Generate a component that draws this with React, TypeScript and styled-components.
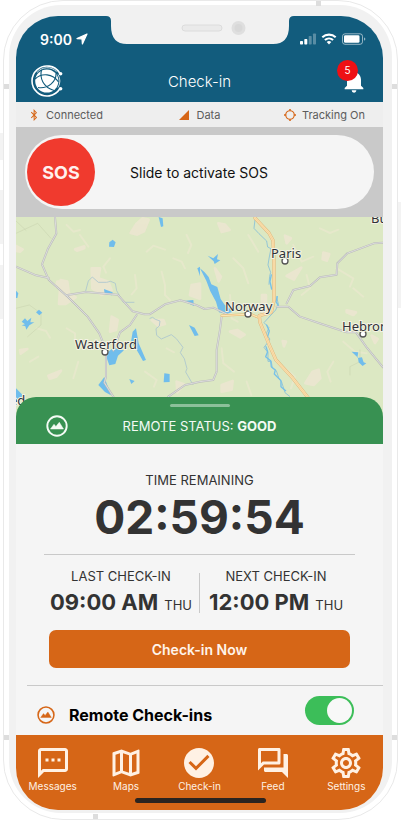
import React, { useState } from "react";
import styled, { createGlobalStyle } from "styled-components";
import {
  MdCheckCircle,
  MdNotifications,
  MdOutlineForum,
  MdOutlineMap,
  MdOutlineSettings,
  MdOutlineSms,
  MdSignalCellular4Bar,
} from "react-icons/md";
import { FaBluetoothB } from "react-icons/fa";

const color = {
  blue: "#125c7d",
  orange: "#d66617",
  green: "#389152",
  panel: "#f5f5f5",
  bezel: "#f1f1f1",
  ink: "#333333",
  line: "#c9c9c9",
};

const GlobalStyle = createGlobalStyle`
  *, *::before, *::after { box-sizing: border-box; }
  body {
    margin: 0;
    background: #ffffff;
    color: ${color.ink};
    font-family: Inter, "Liberation Sans", sans-serif;
  }
  button, input { font: inherit; margin: 0; }
`;

const Stage = styled.div`
  position: relative;
  display: flex;
  min-height: 100vh;
  padding: 0 3px;
`;

const Shell = styled.div`
  position: relative;
  display: flex;
  flex: 1;
  min-width: 0;
  padding: 4px 5px 6px;
  border: 1px solid #e9e9e9;
  border-radius: 60px;
  background: #ffffff;
`;

const Bezel = styled.div`
  display: flex;
  flex: 1;
  min-width: 0;
  padding: 11px 9px 3px 7px;
  border-radius: 52px;
  background: ${color.bezel};
`;

const Screen = styled.main`
  position: relative;
  display: flex;
  flex: 1;
  flex-direction: column;
  min-width: 0;
  overflow: hidden;
  border-radius: 42px;
  background: ${color.panel};
`;

const Antenna = styled.span<{ $side: "left" | "right" | "top" | "bottom"; $at: string }>`
  position: absolute;
  width: 5px;
  height: 5px;
  background: #dddddd;
  ${({ $side }) => `${$side}: 0;`}
  ${({ $side, $at }) => ($side === "left" || $side === "right" ? `top: ${$at};` : `left: ${$at};`)}
`;

const SideKey = styled.span<{ $side: "left" | "right"; $top: number; $length: number }>`
  position: absolute;
  ${({ $side }) => `${$side}: 0;`}
  top: ${({ $top }) => $top}px;
  width: 3px;
  height: ${({ $length }) => $length}px;
  background: #f3f3f3;
`;

const Notch = styled.svg`
  position: absolute;
  top: 0;
  left: 50%;
  width: 188px;
  height: 28px;
  transform: translateX(-50%);
`;

const Header = styled.header`
  background: ${color.blue};
  color: #ffffff;
`;

const StatusBar = styled.div`
  display: flex;
  align-items: center;
  justify-content: space-between;
  height: 46px;
  padding: 0 17px 0 24px;
`;

const Clock = styled.div`
  display: flex;
  align-items: center;
  gap: 4px;
  font-size: 14px;
  font-weight: 600;
`;

const TitleBar = styled.div`
  display: grid;
  grid-template-columns: 1fr auto 1fr;
  align-items: center;
  height: 40px;
  padding: 0 15px 2px;
`;

const Title = styled.h1`
  margin: 0;
  font-size: 15px;
  font-weight: 300;
`;

const BellButton = styled.button`
  position: relative;
  display: flex;
  justify-self: end;
  padding: 0;
  border: 0;
  background: none;
  color: #ffffff;
  font-size: 28px;
`;

const Badge = styled.span`
  position: absolute;
  top: -7px;
  right: 10px;
  width: 21px;
  height: 21px;
  border-radius: 50%;
  background: #ee1015;
  font-size: 10px;
  line-height: 21px;
  text-align: center;
`;

const Connection = styled.ul`
  display: flex;
  align-items: center;
  justify-content: space-between;
  height: 25px;
  margin: 0;
  padding: 0 18px 0 12px;
  background: #eeeeee;
  color: #5c5c5c;
  font-size: 11px;
  list-style: none;
`;

const ConnectionItem = styled.li`
  display: flex;
  align-items: center;
  gap: 6px;
  &:nth-child(2) { padding-left: 12px; }
  svg { width: 12px; height: 12px; color: ${color.orange}; }
`;

const SosBand = styled.section`
  height: 90px;
  padding: 8px 9px;
  background: #c9c9c9;
`;

const SosTrack = styled.label`
  position: relative;
  display: flex;
  align-items: center;
  height: 74px;
  padding: 0 3px 0 2px;
  border-radius: 37px;
  background: ${color.panel};
  color: #111111;
  font-size: 14px;
`;

const SosKnob = styled.span`
  display: grid;
  place-items: center;
  flex: none;
  width: 68px;
  height: 68px;
  border-radius: 50%;
  background: #f03a2e;
  color: #fff1ee;
  font-size: 18px;
  font-weight: 700;
`;

const SosCaption = styled.span`
  flex: 1;
  padding-right: 68px;
  text-align: center;
`;

const SosRange = styled.input`
  position: absolute;
  inset: 0;
  width: 100%;
  height: 100%;
  opacity: 0;
`;

const MapView = styled.svg`
  display: block;
  flex: 1;
  width: 100%;
  min-height: 200px;
  text {
    fill: #303238;
    stroke: #f4f3e4;
    stroke-width: 2px;
    paint-order: stroke;
    font-family: "Noto Sans", sans-serif;
    font-size: 13px;
  }
`;

const Sheet = styled.section`
  position: relative;
  margin-top: -20px;
`;

const SheetHeader = styled.div`
  display: grid;
  grid-template-columns: 1fr auto 1fr;
  align-items: center;
  height: 47px;
  padding: 10px 30px 0;
  border-radius: 20px 20px 0 0;
  background: ${color.green};
  color: #f4fbf5;
  font-size: 13px;
`;

const Grip = styled.span`
  position: absolute;
  top: 7px;
  left: calc(50% - 30px);
  width: 60px;
  height: 3px;
  border-radius: 2px;
  background: #8cc09a;
`;

const Countdown = styled.div`
  margin: 0 28px;
  padding: 27px 0 9px;
  border-bottom: 1px solid ${color.line};
  text-align: center;
`;

const Caption = styled.div`
  font-size: 13px;
  line-height: 18px;
`;

const Timer = styled.div`
  font-size: 46px;
  font-weight: 700;
  line-height: 56px;
`;

const Times = styled.div`
  display: grid;
  grid-template-columns: 1fr 1px 1fr;
  padding: 12px 0 13px;
`;

const TimeCell = styled.div<{ $align: "start" | "end" }>`
  justify-self: ${({ $align }) => $align};
  padding: 0 7px 0 9px;
  text-align: center;
  white-space: nowrap;
`;

const TimeDivider = styled.span`
  margin: 6px 0 4px;
  background: ${color.line};
`;

const Time = styled.div`
  display: flex;
  align-items: baseline;
  gap: 6px;
  height: 32px;
  padding-top: 4px;
  font-size: 13px;
  strong { font-size: 22px; font-weight: 700; }
`;

const CheckInButton = styled.button`
  display: block;
  width: calc(100% - 66px);
  height: 38px;
  margin: 0 33px;
  border: 0;
  border-radius: 7px;
  background: ${color.orange};
  color: #fff4ea;
  font-size: 14px;
  font-weight: 600;
`;

const RemoteRow = styled.label`
  display: flex;
  align-items: center;
  height: 50px;
  margin: 17px 0 0 11px;
  padding: 0 29px 0 10px;
  border-top: 1px solid ${color.line};
  color: #000000;
`;

const RemoteName = styled.span`
  flex: 1;
  padding: 9px 0 0 14px;
  font-size: 16px;
  font-weight: 700;
`;

const RemoteIcon = styled.span`
  display: flex;
  padding-top: 9px;
  color: ${color.orange};
`;

const Switch = styled.input`
  position: relative;
  flex: none;
  width: 49px;
  height: 29px;
  border-radius: 15px;
  background: #d0d0d0;
  appearance: none;
  &::after {
    content: "";
    position: absolute;
    top: 2px;
    left: 2px;
    width: 25px;
    height: 25px;
    border-radius: 50%;
    background: #f8f8f8;
  }
  &:checked { background: #3cbe59; }
  &:checked::after { left: 22px; }
`;

const TabBar = styled.nav`
  position: relative;
  display: grid;
  grid-template-columns: repeat(5, 1fr);
  height: 75px;
  padding-top: 10px;
  background: ${color.orange};
`;

const Tab = styled.a`
  display: flex;
  flex-direction: column;
  align-items: center;
  color: #fff1e4;
  font-size: 10px;
  line-height: 12px;
  text-decoration: none;
  svg { width: 36px; height: 36px; margin-bottom: -1px; }
`;

const HomeBar = styled.span`
  position: absolute;
  bottom: 7px;
  left: calc(50% - 65px);
  width: 131px;
  height: 5px;
  border-radius: 3px;
  background: #2b2420;
`;

function Logo() {
  return (
    <svg width="32" height="32" viewBox="0 0 32 32" fill="none" aria-hidden="true">
      <circle cx="15.800" cy="16" r="11.600" fill="#fff" />
      <path d="M28.700 8A15 15 0 1 0 28.700 24" stroke="#fff" strokeWidth="1.600" />
      <path d="M25.500 6.500A13.300 13.300 0 0 0 6 7.500" stroke="#fff" strokeWidth=".8" />
      <path d="M27 9.500A13 13 0 0 1 27 22.500" stroke="#fff" strokeWidth=".8" />
      <circle cx="29.600" cy="8.700" r="1.800" fill="#fff" />
      <circle cx="29.600" cy="23.700" r="1.800" fill="#fff" />
      <g stroke={color.blue} strokeWidth="1.100">
        <path d="M10.500 5C8.500 13 12 22 23 25.500" />
        <path d="M4 14C11 7.500 21.500 8.500 27.500 17" />
        <path d="M25 8.500C25.500 16.500 17 24 7 22.500" />
      </g>
    </svg>
  );
}

function LocationArrow() {
  return (
    <svg width="12" height="12" viewBox="0 0 12 12" aria-hidden="true">
      <path d="M11 1 1 5.600 6 6 6.400 11Z" fill="#fff" stroke="#fff" strokeWidth="1.200" strokeLinejoin="round" />
    </svg>
  );
}

function StatusGlyphs() {
  return (
    <svg width="66" height="14" viewBox="0 0 66 14" fill="none" role="img" aria-label="Signal, Wi-Fi and battery">
      <rect x="0" y="9" width="3" height="3.500" rx=".7" fill="#fff" />
      <rect x="4.300" y="7" width="3" height="5.500" rx=".7" fill="#fff" />
      <rect x="8.700" y="4" width="3" height="8.500" rx=".7" fill="#fff" opacity=".3" />
      <rect x="13" y="1.500" width="3" height="11" rx=".7" fill="#fff" opacity=".3" />
      <g stroke="#fff" strokeWidth="2.100">
        <path d="M22.300 5.200a10 10 0 0 1 13.400 0" />
        <path d="M24.900 8a6.200 6.200 0 0 1 8.200 0" />
      </g>
      <path d="M26.700 10a3.600 3.600 0 0 1 4.600 0L29 12.500Z" fill="#fff" />
      <rect x="42.500" y="1.800" width="20" height="10.500" rx="2.500" stroke="#fff" opacity=".55" />
      <rect x="44" y="3.300" width="15.500" height="7.500" rx="1.300" fill="#fff" />
      <path d="M64 5.500v3.200c1-.3 1.300-.9 1.300-1.600S65 5.800 64 5.500Z" fill="#fff" opacity=".55" />
    </svg>
  );
}

function MountainIcon({ size }: { size: number }) {
  return (
    <svg width={size} height={size} viewBox="0 0 22 22" fill="none" aria-hidden="true">
      <circle cx="11" cy="11" r="9.700" stroke="currentColor" strokeWidth="1.900" />
      <path
        d="M4.500 14 8 9.300l1.900 2.200L13.300 7.300 17.500 14Z"
        fill="currentColor"
        stroke="currentColor"
        strokeWidth=".5"
        strokeLinejoin="round"
      />
    </svg>
  );
}

function TrackingIcon() {
  return (
    <svg viewBox="0 0 13 13" fill="none" stroke="currentColor" aria-hidden="true">
      <circle cx="6.500" cy="6.500" r="4.600" strokeWidth="1.300" />
      <path d="M6.500 0v2M6.500 11V13M0 6.500h2M11 6.500H13" strokeWidth="1.700" />
    </svg>
  );
}

const fields = [
  "M275 160l25 0-5 30 30 10 10 26-30 14-28-20Z",
  "M182 195l20 5 5 35 20 12-30 20-20 0Z",
  "M408 28l20-18 18 4-14 35-20 10-20-5Z",
  "M335 305l18 10-5 30-18 5Z",
  "M455 315l35 0 5 12-20 6Z",
  "M575 210l25-4v45l-30-10Z",
  "M48 93l20 10-8 7-12-2Z",
  "M172 200l12 0-4 15-12 0Z",
  "M60 405l22-3-20 14Z",
  "M145 482l38-15-14 18-20 6Z",
  "M530 500l22 8-20 24Z",
  "M225 103l28-9 0 6-22 7Z",
  "M655 25l20 4 14 16-24 6Z",
  "M855 62l18 8-13 15Z",
  "M860 183l44-25-22 36Z",
  "M970 113l18 4-7 20-13-4Z",
  "M938 470l18-6 5 26-20 20-25-5Z",
  "M690 350l22-5 22 14-13 8Z",
  "M645 160l18 25-7 14Z",
  "M1040 286l28 6-8 8-20-8Z",
  "M1115 362l18 10-8 12Z",
  "M848 378l10 2-6 14Z",
  "M665 510l33-12-3 26-30 6Z",
  "M786 240l12 0 0 60-12-5Z",
];

const hedges = [
  "M485 170l10 40 0 30 15 15M520 130l25 10 10 20M440 110l20-18 35 12",
  "M405 180l5 40-15 18M200 30l20 20 20-5M240 60l25 35",
  "M700 130l30 30 15 45M745 60l30 50M880 90l25 50 35-15",
  "M920 180l10 40-25 20M1010 160l50 30-10 25M690 240l5 70 18 10",
  "M850 455l35 30-12 35M1030 380l35 30 35 5M665 400l5 45 32 25",
  "M200 340l25 15 0 20M90 440l25-15M235 440l-15 50M435 470l35 25-8 20",
  "M330 130l-20 25 8 18M560 60l14 30-10 24M110 340l28 8 12 20M500 400l22 12",
  "M960 40l30 14 25-10M1060 220l30 25M1000 440l-18 30 10 30M740 500l14 40",
];

const lakes = [
  "M328 82l10-8 9 8-5 14-15-1Z",
  "M476 6l12 4 2 24-7 2Z",
  "M312 222l26 10-2 9-22-4Z",
  "M398 350l10-10 8 45 22 50-9 3-20-35-16-22Z",
  "M325 410l15-12 32 8-18 16-8 25-18 4-8-23Z",
  "M295 510l18-24 20 55-18-10Z",
  "M493 475l16 2 0 24-18 1Z",
  "M388 492l16 6-10 9Z",
  "M567 330l17 8 12 23-12 2Z",
  "M550 258l30-3 2 18Z",
  "M65 320l10-10 7 8 12-10-3 14 12 0-15 9-9 13-3-10-11-3 10-3Z",
  "M108 292l9-8 10 9-9 8Z",
  "M48 227l7 8-3 14-4 0Z",
  "M48 520l20 20-6 12-14 0Z",
  "M600 160l14 12 12 14 8 22 18 8 10 36 12 17 30 20-25 8-22-5-9-32-17-31-12-32Z",
  "M623 122l17 8 14-13-3 16 10 3-17 11-3-8Z",
  "M1055 410l20 2-3 17 14-2 5 15 8 3-11 8-12-11-2-14Z",
  "M592 160l8-5 0 28Z",
];

const streams = [
  "M257 228l8-30 12-12 18 16 25 0 12-3 14 6 4 22 20 35 32 0M450 310l8-3 8 6 14 5-2 15-10 8 2 20 14 11 30-13 15 12 20 26-8 16 12 18 8 30-4 10 22 38",
  "M765 15l-3 25 15 16 23 22 3 18 10 5-5 25-4 24 8 22-3 12-2 24M830 245l5 22-8 18-35 38 15 15-9 20 12 14-10 15-8 10 12 16 0 26 10 0 3 20 12 8 8 24 8 10 10 32 14 11",
];

const minorRoads = [
  "M165 6l4 50-25 45-18 47 20 46 52 47 60-10 95 8 45 50 35 9 16 0 46-30 46-12 50 15 23 11 26-4 42 20",
  "M48 155l60 26 38 8",
  "M198 240l65 65 35 50 20 50 0 80-5 18 30 47",
  "M410 300l-20 30-30 22-20 55",
  "M665 305l-5 40-10 60 0 65-10 25-40 5-45 10-50 35",
  "M830 275l35 0 35 30 65 22 75 25 28 0 32 45 49 60",
  "M860 265l20-40 50-12 30-26 50-8 2-34 30-30 80-30 27-2",
];

const highway = "M765 9l42 45 12 22 3 60 0 120-8 36-36 10 2 20 28 68 20 45 50 54 50 64";

const towns = [
  { name: "Paris", labelX: 255, labelY: 41, x: 269, y: 44 },
  { name: "Norway", labelX: 209, labelY: 94, x: 232, y: 97 },
  { name: "Hebron", labelX: 326, labelY: 114, x: 347, y: 117 },
  { name: "Waterford", labelX: 59, labelY: 132, x: 89, y: 135 },
];

function TownMap() {
  return (
    <MapView viewBox="0 0 367 200" preserveAspectRatio="xMidYMin slice" role="img" aria-label="Map around Norway">
      <rect width="367" height="200" fill="#dce8c3" />
      <g transform="translate(-16 -2) scale(.3333)" fill="none" strokeLinejoin="round" strokeLinecap="round">
        <g fill="#eee6d2" stroke="#eee6d2" strokeWidth="8" opacity=".8">
          {fields.map((d) => <path key={d} d={d} />)}
        </g>
        <g stroke="#e9e8cd" strokeWidth="6" opacity=".8">
          {hedges.map((d) => <path key={d} d={d} />)}
        </g>
        <path d="M48 55l65-30 40 45M48 280l40-10 35 25 0 35-40 35M1050 480l0-25 30-15 0-35M48 18l30 28" stroke="#cbd7b2" strokeWidth="2" />
        <g stroke="#86bfd9" strokeWidth="2.500">
          <path d={streams[0]} stroke="#abc5cf" />
          <path d={streams[1]} />
        </g>
        <g stroke="#77c1e9" strokeWidth="4">
          <path d="M814 180l-4 20 5 22M832 245l-4 15 7 11M800 330l8 18-5 16M798 395l5 15-6 15 15 12 2 18 12 10-3 12 20 20 0 18 14 12" />
        </g>
        <g fill="#70bdec">
          {lakes.map((d) => <path key={d} d={d} />)}
        </g>
        {minorRoads.map((d) => <path key={d} d={d} stroke="#bbbcbb" strokeWidth="6" />)}
        {minorRoads.map((d) => <path key={d} d={d} stroke="#dcdcdc" strokeWidth="3" />)}
        <path d="M665 302l60-3 30 0 24 10" stroke="#e6b66f" strokeWidth="7" />
        <path d="M665 302l60-3 30 0 24 10" stroke="#fbe5b5" strokeWidth="4" />
        <path d={highway} stroke="#e0b87c" strokeWidth="10" />
        <path d={highway} stroke="#fce0ae" strokeWidth="7" />
        <path d={highway} stroke="#e7bd7b" strokeWidth="1" />
      </g>
      {towns.map((town) => (
        <g key={town.name}>
          <circle cx={town.x} cy={town.y} r="3" fill="#fff" stroke="#555" strokeWidth="1.300" />
          <text x={town.labelX} y={town.labelY}>{town.name}</text>
        </g>
      ))}
      <text x="355" y="6">Bu</text>
      <text x="-6" y="188">ed</text>
    </MapView>
  );
}

const tabs = [
  { name: "Messages", Icon: MdOutlineSms },
  { name: "Maps", Icon: MdOutlineMap },
  { name: "Check-in", Icon: MdCheckCircle },
  { name: "Feed", Icon: MdOutlineForum },
  { name: "Settings", Icon: MdOutlineSettings },
];

export default function App() {
  const [slide, setSlide] = useState(0);
  const [remote, setRemote] = useState(true);

  return (
    <>
      <GlobalStyle />
      <Stage>
        <SideKey $side="left" $top={133} $length={27} />
        <SideKey $side="left" $top={190} $length={54} />
        <SideKey $side="left" $top={265} $length={54} />
        <SideKey $side="right" $top={202} $length={106} />
        <Shell>
          <Antenna $side="left" $at="83px" />
          <Antenna $side="right" $at="83px" />
          <Antenna $side="left" $at="734px" />
          <Antenna $side="right" $at="734px" />
          <Antenna $side="top" $at="312px" />
          <Antenna $side="bottom" $at="89px" />
          <Bezel>
            <Screen>
              <Header>
                <StatusBar>
                  <Clock>
                    9:00 <LocationArrow />
                  </Clock>
                  <StatusGlyphs />
                </StatusBar>
                <TitleBar>
                  <Logo />
                  <Title>Check-in</Title>
                  <BellButton type="button" aria-label="Notifications">
                    <MdNotifications />
                    <Badge>5</Badge>
                  </BellButton>
                </TitleBar>
              </Header>
              <Notch viewBox="0 0 188 28" aria-hidden="true">
                <path d="M0 0Q5 0 5 5V10Q5 28 21 28H167Q183 28 183 10V5Q183 0 188 0Z" fill={color.bezel} />
                <rect x="76" y="9" width="40" height="6" rx="3" fill="#eaeaea" stroke="#dcdcdc" />
                <circle cx="132.500" cy="12" r="7" fill="#dfdfdf" />
                <circle cx="132.500" cy="12" r="4" fill="#d8d8d8" />
              </Notch>

              <Connection>
                <ConnectionItem><FaBluetoothB />Connected</ConnectionItem>
                <ConnectionItem><MdSignalCellular4Bar />Data</ConnectionItem>
                <ConnectionItem><TrackingIcon />Tracking On</ConnectionItem>
              </Connection>

              <SosBand>
                <SosTrack>
                  <SosKnob style={{ transform: `translateX(${slide * 2.7}px)` }}>SOS</SosKnob>
                  <SosCaption>Slide to activate SOS</SosCaption>
                  <SosRange
                    type="range"
                    min={0}
                    max={100}
                    value={slide}
                    onChange={(event) => setSlide(Number(event.target.value))}
                  />
                </SosTrack>
              </SosBand>

              <TownMap />

              <Sheet>
                <SheetHeader>
                  <Grip />
                  <MountainIcon size={22} />
                  <span>REMOTE STATUS: <b>GOOD</b></span>
                </SheetHeader>
                <Countdown>
                  <Caption>TIME REMAINING</Caption>
                  <Timer>02:59:54</Timer>
                </Countdown>
                <Times>
                  <TimeCell $align="end">
                    <Caption>LAST CHECK-IN</Caption>
                    <Time><strong>09:00 AM</strong> THU</Time>
                  </TimeCell>
                  <TimeDivider />
                  <TimeCell $align="start">
                    <Caption>NEXT CHECK-IN</Caption>
                    <Time><strong>12:00 PM</strong> THU</Time>
                  </TimeCell>
                </Times>
                <CheckInButton type="button">Check-in Now</CheckInButton>
                <RemoteRow>
                  <RemoteIcon><MountainIcon size={18} /></RemoteIcon>
                  <RemoteName>Remote Check-ins</RemoteName>
                  <Switch
                    type="checkbox"
                    role="switch"
                    checked={remote}
                    onChange={(event) => setRemote(event.target.checked)}
                  />
                </RemoteRow>
              </Sheet>

              <TabBar>
                {tabs.map(({ name, Icon }) => (
                  <Tab key={name} href={`#${name.toLowerCase()}`}>
                    <Icon aria-hidden="true" />
                    {name}
                  </Tab>
                ))}
                <HomeBar />
              </TabBar>
            </Screen>
          </Bezel>
        </Shell>
      </Stage>
    </>
  );
}
